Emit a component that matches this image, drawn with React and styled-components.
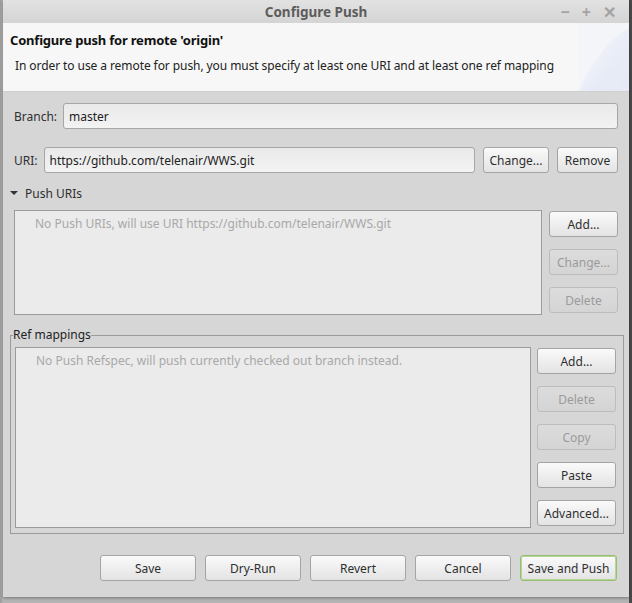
import React from 'react';
import styled, { createGlobalStyle } from 'styled-components';

const GlobalStyle = createGlobalStyle`
  html, body {
    margin: 0;
    padding: 0;
    background: #8e8e8e;
    font-family: "Noto Sans", "Open Sans", sans-serif;
    font-size: 12px;
    color: #2f2f2f;
  }
`;

const Screen = styled.div`
  width: 632px;
  height: 603px;
  display: flex;
  background: linear-gradient(90deg, #9a9a9a 0, #b5b5b5 3px, #b5b5b5 629px, #4a4a4a 629px);
`;

const Window = styled.div`
  margin-left: 3px;
  width: 626px;
  height: 597px;
  display: flex;
  flex-direction: column;
  background: #d6d6d6;
  box-shadow: 0 1px 3px rgba(0, 0, 0, 0.35);
`;

const TitleBar = styled.div`
  height: 23px;
  flex: none;
  display: flex;
  align-items: center;
  justify-content: center;
  position: relative;
  background: linear-gradient(#e2e2e2, #d4d4d4);
  color: #5c5c5c;
  font-weight: bold;
  font-size: 13.5px;
`;

const Controls = styled.div`
  position: absolute;
  right: 13px;
  top: 0;
  height: 23px;
  display: flex;
  align-items: center;
  gap: 12px;
  color: #a3a3a3;
  font-size: 16px;
  font-weight: bold;
`;

const Header = styled.div`
  height: 69px;
  flex: none;
  display: flex;
  background: #f7f7f7;
  border-bottom: 1px solid #cfcfcf;
  box-sizing: border-box;
`;

const HeaderText = styled.div`
  flex: 1;
  padding: 8px 0 0 7px;
`;

const HeaderTitle = styled.div`
  font-weight: bold;
  font-size: 13px;
  letter-spacing: -0.2px;
  color: #111;
`;

const HeaderSub = styled.div`
  margin: 8px 0 0 5px;
  letter-spacing: -0.08px;
  color: #222;
`;

const Body = styled.div`
  flex: 1;
  display: flex;
  flex-direction: column;
  padding: 0 5px 0 7px;
`;

const FieldRow = styled.div`
  display: flex;
  align-items: center;
  gap: 8px;
  margin: ${(p) => p.$top}px 6px 0 4px;
  height: 26px;
`;

const Label = styled.span`
  color: #2f2f2f;
  margin-right: -2px;
`;

const Input = styled.div`
  flex: 1;
  height: 26px;
  box-sizing: border-box;
  display: flex;
  align-items: center;
  padding: 0 5px;
  border: 1px solid #a6a6a6;
  border-radius: 3px;
  background: linear-gradient(#e9e9e9, #f3f3f3);
  color: #222;
`;

const Button = styled.button`
  height: 26px;
  width: ${(p) => p.$w}px;
  box-sizing: border-box;
  padding: 0;
  font-family: inherit;
  font-size: 12px;
  border-radius: 3px;
  border: 1px solid ${(p) => (p.$primary ? '#98bf6f' : p.disabled ? '#bcbcbc' : '#a4a4a4')};
  box-shadow: ${(p) => (p.$primary ? 'inset 0 0 0 1px #b6d39a' : 'none')};
  background: ${(p) =>
    p.disabled ? 'linear-gradient(#dcdcdc, #d4d4d4)' : 'linear-gradient(#fafafa, #e3e3e3)'};
  color: ${(p) => (p.disabled ? '#9b9b9b' : '#2f2f2f')};
  flex: none;
`;

const Toggle = styled.div`
  display: flex;
  align-items: center;
  gap: 7px;
  margin: 11px 0 0 0;
  height: 18px;
`;

const Arrow = styled.span`
  width: 0;
  height: 0;
  border-left: 4px solid transparent;
  border-right: 4px solid transparent;
  border-top: 4px solid #333;
`;

const ListSection = styled.div`
  display: flex;
  gap: ${(p) => p.$gap}px;
  margin: ${(p) => p.$top}px ${(p) => p.$right}px 0 ${(p) => p.$left}px;
  height: ${(p) => p.$h}px;
`;

const ListBox = styled.div`
  flex: 1;
  box-sizing: border-box;
  border: 1px solid #9b9b9b;
  background: #ebebeb;
  padding: 4px 0 0 20px;
  color: #a8a8a8;
`;

const ButtonColumn = styled.div`
  display: flex;
  flex-direction: column;
  gap: 12px;
  padding-top: ${(p) => p.$top}px;
`;

const Group = styled.fieldset`
  margin: 13px 0 0 0;
  padding: 5px 7px 5px 4px;
  border: 1px solid #9b9b9b;
  height: 206px;
  box-sizing: border-box;
  min-width: 0;
`;

const Legend = styled.legend`
  padding: 0;
  margin-left: -2px;
  color: #222;
  line-height: 14px;
`;

const Footer = styled.div`
  display: flex;
  justify-content: flex-end;
  gap: 9px;
  margin: 21px 7px 0 0;
`;

const Decor = () => (
  <svg width="50" height="68" viewBox="0 0 50 68">
    <defs>
      <linearGradient id="dg" x1="0" y1="0" x2="1" y2="1">
        <stop offset="0" stopColor="#f7f8fb" />
        <stop offset="1" stopColor="#dfe5f4" />
      </linearGradient>
    </defs>
    <rect x="0" y="0" width="50" height="68" fill="#f4f5f9" />
    <path d="M0 68 C10 45 25 20 50 5 L50 68 Z" fill="url(#dg)" />
    <path d="M8 68 C20 52 32 42 50 36 L50 68 Z" fill="#e6ebf6" opacity="0.8" />
  </svg>
);

export default function App() {
  return (
    <>
      <GlobalStyle />
      <Screen>
        <Window>
          <TitleBar>
            Configure Push
            <Controls>
              <span>−</span>
              <span>+</span>
              <span>✕</span>
            </Controls>
          </TitleBar>
          <Header>
            <HeaderText>
              <HeaderTitle>Configure push for remote 'origin'</HeaderTitle>
              <HeaderSub>
                In order to use a remote for push, you must specify at least one URI and at least one ref mapping
              </HeaderSub>
            </HeaderText>
            <Decor />
          </Header>
          <Body>
            <FieldRow $top={11}>
              <Label>Branch:</Label>
              <Input>master</Input>
            </FieldRow>
            <FieldRow $top={18}>
              <Label>URI:</Label>
              <Input>https://github.com/telenair/WWS.git</Input>
              <Button $w={66}>Change...</Button>
              <Button $w={61}>Remove</Button>
            </FieldRow>
            <Toggle>
              <Arrow />
              Push URIs
            </Toggle>
            <ListSection $top={8} $left={4} $right={6} $h={105} $gap={7}>
              <ListBox>No Push URIs, will use URI https://github.com/telenair/WWS.git</ListBox>
              <ButtonColumn $top={1}>
                <Button $w={69}>Add...</Button>
                <Button $w={69} disabled>Change...</Button>
                <Button $w={69} disabled>Delete</Button>
              </ButtonColumn>
            </ListSection>
            <Group>
              <Legend>Ref mappings</Legend>
              <ListSection $top={0} $left={0} $right={0} $h={181} $gap={6}>
                <ListBox>No Push Refspec, will push currently checked out branch instead.</ListBox>
                <ButtonColumn $top={1}>
                  <Button $w={79}>Add...</Button>
                  <Button $w={79} disabled>Delete</Button>
                  <Button $w={79} disabled>Copy</Button>
                  <Button $w={79}>Paste</Button>
                  <Button $w={79}>Advanced...</Button>
                </ButtonColumn>
              </ListSection>
            </Group>
            <Footer>
              <Button $w={96}>Save</Button>
              <Button $w={96}>Dry-Run</Button>
              <Button $w={96}>Revert</Button>
              <Button $w={96}>Cancel</Button>
              <Button $w={97} $primary>Save and Push</Button>
            </Footer>
          </Body>
        </Window>
      </Screen>
    </>
  );
}
